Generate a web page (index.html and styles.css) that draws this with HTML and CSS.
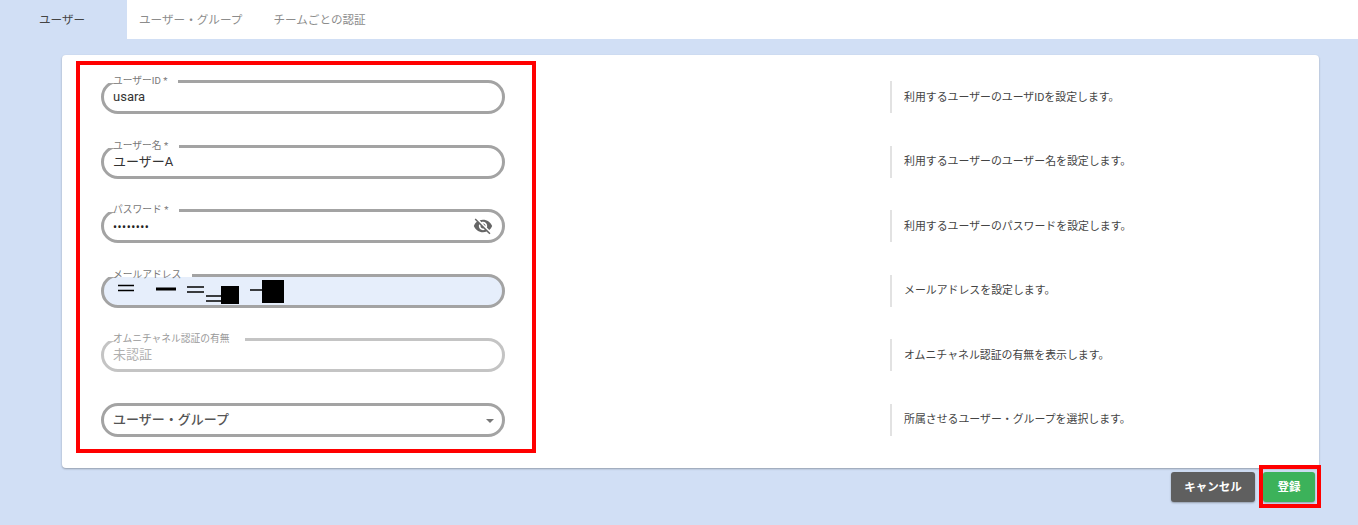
FILE: index.html
```html
<!DOCTYPE html>
<html lang="ja">
<head>
<meta charset="utf-8">
<title>ユーザー</title>
<link rel="stylesheet" href="styles.css">
</head>
<body>
<div class="page">
  <nav class="tabs">
    <div class="tab tab-active">ユーザー</div>
    <div class="tab">ユーザー・グループ</div>
    <div class="tab">チームごとの認証</div>
  </nav>
  <main class="content">
    <section class="card">
      <div class="row">
        <div class="field"><span class="label">ユーザーID *</span><span class="value">usara</span></div>
        <p class="desc">利用するユーザーのユーザIDを設定します。</p>
      </div>
      <div class="row">
        <div class="field"><span class="label">ユーザー名 *</span><span class="value">ユーザーA</span></div>
        <p class="desc">利用するユーザーのユーザー名を設定します。</p>
      </div>
      <div class="row">
        <div class="field">
          <span class="label">パスワード *</span><span class="value value-dots">••••••••</span>
          <svg class="eye" viewBox="0 0 24 24" width="20" height="20"><path d="M12 7c2.76 0 5 2.24 5 5 0 .65-.13 1.26-.36 1.83l2.92 2.92c1.51-1.26 2.7-2.89 3.43-4.75-1.73-4.39-6-7.5-11-7.5-1.4 0-2.74.25-3.98.7l2.16 2.16C10.74 7.13 11.35 7 12 7zM2 4.27l2.28 2.28.46.46C3.08 8.3 1.78 10.02 1 12c1.73 4.39 6 7.5 11 7.5 1.55 0 3.03-.3 4.38-.84l.42.42L19.73 22 21 20.73 3.27 3 2 4.27zM7.53 9.8l1.55 1.55c-.05.21-.08.43-.08.65 0 1.66 1.34 3 3 3 .22 0 .44-.03.65-.08l1.55 1.55c-.67.33-1.41.53-2.2.53-2.76 0-5-2.24-5-5 0-.79.2-1.53.53-2.2zm4.31-.78l3.15 3.15.02-.16c0-1.66-1.34-3-3-3l-.17.01z"/></svg>
        </div>
        <p class="desc">利用するユーザーのパスワードを設定します。</p>
      </div>
      <div class="row">
        <div class="field field-filled">
          <span class="label">メールアドレス</span>
          <svg class="redaction" viewBox="0 0 170 26" width="170" height="26">
            <path class="redaction-line" d="M0 7.5h16M0 12.5h16M69 9h17M69 14h17M88 18h15M88 23h15M132 12h13"/>
            <rect x="38" y="9.5" width="20" height="3"/>
            <rect x="103" y="8" width="18" height="18"/>
            <rect x="144" y="2" width="22" height="23"/>
          </svg>
        </div>
        <p class="desc">メールアドレスを設定します。</p>
      </div>
      <div class="row">
        <div class="field field-disabled"><span class="label label-wide">オムニチャネル認証の有無</span><span class="value">未認証</span></div>
        <p class="desc">オムニチャネル認証の有無を表示します。</p>
      </div>
      <div class="row">
        <div class="field field-select"><span class="value">ユーザー・グループ</span><span class="caret"></span></div>
        <p class="desc">所属させるユーザー・グループを選択します。</p>
      </div>
    </section>
    <div class="actions">
      <button class="btn btn-cancel" type="button">キャンセル</button>
      <button class="btn btn-submit" type="button">登録</button>
    </div>
  </main>
  <div class="mark mark-form"></div>
  <div class="mark mark-submit"></div>
</div>
</body>
</html>
```
FILE: styles.css
```css
* { box-sizing: border-box; }
html, body { margin: 0; height: 100%; }
body {
  font-family: Roboto, "Noto Sans CJK JP", sans-serif;
  background: #d1dff5;
  color: #333;
  overflow: hidden;
}
.page { position: relative; height: 525px; }
.tabs { display: flex; height: 39px; background: #fff; gap: 7px; }
.tab {
  display: flex;
  align-items: center;
  padding: 0 12px 2px;
  font-size: 11.6px;
  color: #8c8c8c;
}
.tab-active {
  width: 127px;
  justify-content: center;
  background: #d1dff5;
  color: #444;
  margin-right: -7px;
  padding: 0 3px 2px 0;
}
.content { padding: 16px 39px 0 62px; }
.card {
  display: flex;
  flex-direction: column;
  gap: 30.5px;
  height: 413px;
  padding: 25px 0 0 39px;
  background: #fff;
  border-radius: 4px;
  box-shadow: 0 1px 2px rgba(0, 0, 0, .3);
}
.row { display: flex; align-items: center; height: 34px; }
.field {
  position: relative;
  display: flex;
  align-items: center;
  width: 404px;
  height: 34px;
  padding: 0 9px;
  border: 3px solid #a3a3a3;
  border-radius: 17px;
}
.label {
  position: absolute;
  top: -9px;
  left: 4px;
  padding: 0 11px 0 5px;
  font-size: 9.75px;
  line-height: 14px;
  color: #777;
  background: linear-gradient(#fff 65%, transparent 65%);
}
.label-wide { padding-right: 15px; }
.value { font-size: 13px; line-height: 16px; color: #333; }
.value-dots { font-size: 12px; letter-spacing: .5px; color: #222; margin-top: 2px; }
.eye { position: absolute; right: 9px; top: 4px; fill: #666; }
.field-filled { background: #e6eefb; }
.redaction { position: absolute; left: 14px; top: 1px; fill: #000; }
.redaction-line { fill: none; stroke: #000; stroke-width: 1.6; }
.field-disabled { border-color: #c4c4c4; }
.field-disabled .label { color: #999; }
.field-disabled .value { color: #b0b0b0; }
.field-select .value { font-weight: 500; color: #555; }
.caret {
  position: absolute;
  right: 8px;
  top: 13px;
  border: 4px solid transparent;
  border-top: 4px solid #777;
  border-bottom: 0;
}
.desc {
  display: flex;
  align-items: center;
  width: 429px;
  height: 32px;
  margin: 0 0 0 auto;
  padding: 0 0 3px 12px;
  border-left: 2px solid #e2e2e2;
  font-size: 10.9px;
  color: #444;
}
.actions {
  display: flex;
  justify-content: flex-end;
  gap: 8px;
  padding: 4px 4px 0 0;
}
.btn {
  height: 30px;
  padding: 0 0 2px;
  border: 0;
  border-radius: 3px;
  font-family: inherit;
  font-size: 11.5px;
  font-weight: 700;
  color: #fff;
  box-shadow: 0 1px 2px rgba(0, 0, 0, .3);
}
.btn-cancel { width: 84px; background: #5f5f5f; }
.btn-submit { width: 52px; background: #3cb25a; }
.mark { position: absolute; border: 4px solid #f00; pointer-events: none; }
.mark-form { left: 76px; top: 61px; width: 460px; height: 392px; }
.mark-submit { left: 1259px; top: 465px; width: 62px; height: 43px; }
```
